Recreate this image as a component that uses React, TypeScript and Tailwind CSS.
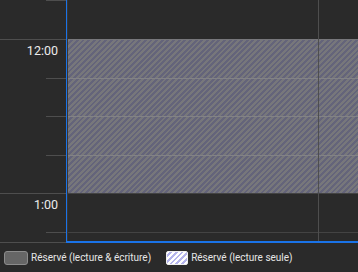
import React from 'react';

const hatch =
  'bg-[repeating-linear-gradient(135deg,#77777b_0px,#77777b_2px,#64647a_2px,#64647a_4px)]';

// slot rows: top edge y and height, hour rows carry a label
const slots = [
  { h: 39, label: '', hour: false, booked: false },
  { h: 39, label: '12:00', hour: true, booked: true },
  { h: 38, label: '', hour: false, booked: true },
  { h: 39, label: '', hour: false, booked: true },
  { h: 38, label: '', hour: false, booked: true },
  { h: 39, label: '1:00', hour: true, booked: false },
  { h: 9, label: '', hour: false, booked: false },
];

const heights: Record<number, string> = {
  39: 'h-[39px]',
  38: 'h-[38px]',
  9: 'h-[9px]',
};

const DayColumn: React.FC<{ width: string; last?: boolean }> = ({ width, last }) => (
  <div className={`${width} flex flex-col ${last ? '' : 'border-r border-[#4e4e4e]'}`}>
    {slots.map((s, i) => (
      <div
        key={i}
        className={`${heights[s.h]} shrink-0 border-t ${
          s.booked ? `${hatch} ${i === 1 ? 'border-[#77777b]' : 'border-[#828286]'}` : 'border-[#434343]'
        } ${i === 0 ? 'border-transparent' : ''}`}
      />
    ))}
  </div>
);

export default function App() {
  return (
    <div className="flex h-[272px] w-[358px] flex-col overflow-hidden bg-[#2a2a2a] font-['Roboto',sans-serif] text-[#e6e6e6]">
      <div className="flex h-[243px] shrink-0">
        {/* time gutter */}
        <div className="flex w-[66px] shrink-0 flex-col border-b border-[#4e4e4e]">
          {slots.map((s, i) => (
            <div key={i} className={`${heights[s.h]} relative shrink-0`}>
              {s.hour ? (
                <div className="h-px w-full bg-[#4e4e4e]" />
              ) : (
                <div className="ml-[46px] h-px w-[20px] bg-[#4e4e4e]" />
              )}
              {s.label && (
                <div className="pr-2 pt-[3px] text-right text-[12.5px] leading-4 text-[#ececec]">
                  {s.label}
                </div>
              )}
            </div>
          ))}
        </div>
        {/* day area */}
        <div className="flex flex-1 border-b-2 border-l border-[#1a73e8]">
          <div className="w-px shrink-0 bg-[#3a3530]" />
          <DayColumn width="w-[251px]" />
          <DayColumn width="flex-1" last />
        </div>
      </div>
      {/* legend */}
      <div className="flex flex-1 items-center pl-1 text-[10px]">
        <div className="flex items-center gap-[3px]">
          <span className="h-[14px] w-[24px] rounded-[3px] border border-[#8c8c8c] bg-[#666666]" />
          <span>Réservé (lecture &amp; écriture)</span>
        </div>
        <div className="ml-[15px] flex items-center gap-[3px]">
          <span className="h-[14px] w-[22px] rounded-[2px] border border-[#f0f0f0] bg-[repeating-linear-gradient(135deg,#ffffff_0px,#ffffff_2px,#b4b4ec_2px,#b4b4ec_4px)]" />
          <span>Réservé (lecture seule)</span>
        </div>
      </div>
    </div>
  );
}
